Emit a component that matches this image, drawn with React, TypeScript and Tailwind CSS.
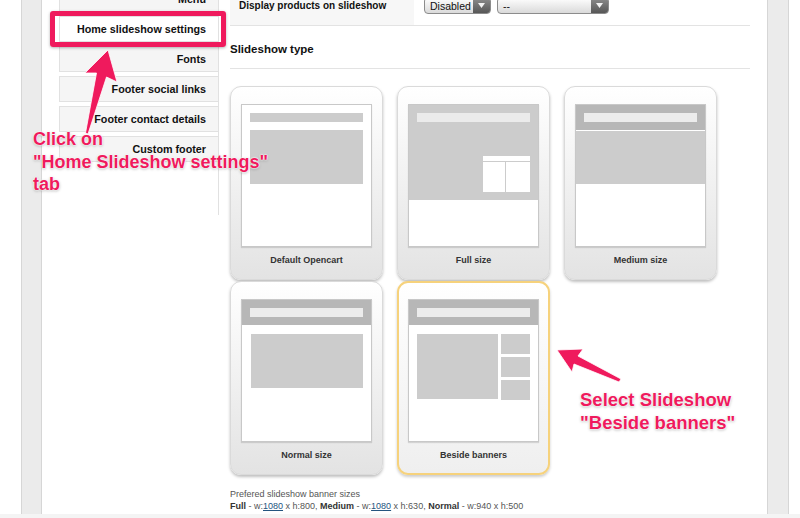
import React from 'react';

const PINK = 'text-[#ef1a5d]';

interface CardProps {
  label: string;
  selected?: boolean;
  children: React.ReactNode;
}

// one slideshow layout option
const LayoutCard: React.FC<CardProps> = ({ label, selected, children }) => (
  <div
    className={
      selected
        ? 'w-[153px] h-[194px] rounded-[11px] border-2 border-[#f6d27c] bg-linear-to-b from-white to-[#efefef] shadow-[0_2px_3px_rgba(0,0,0,0.2)] flex flex-col items-center pt-[16px]'
        : 'w-[153px] h-[194px] rounded-[11px] border border-[#dadada] bg-linear-to-b from-white to-[#e3e3e3] shadow-[0_2px_3px_rgba(0,0,0,0.25)] flex flex-col items-center pt-[17px]'
    }
  >
    <div className="w-[131px] h-[143px] bg-white border border-[#c8c8c8] shadow-[0_1px_1px_rgba(0,0,0,0.12)] overflow-hidden">
      {children}
    </div>
    <div className="mt-[8px] text-[9px] leading-[10px] font-bold text-[#333]">{label}</div>
  </div>
);

const Header = () => (
  <div className="h-[25px] bg-[#b7b7b7] px-[8px] pt-[8px]">
    <div className="h-[9px] bg-[#ececec]" />
  </div>
);

const Select: React.FC<{ text: string; width: string }> = ({ text, width }) => (
  <div
    className={`${width} h-[17px] rounded-[4px] border border-[#8c8c8c] bg-linear-to-b from-white to-[#dadada] flex items-center justify-between overflow-hidden`}
  >
    <span className="pl-[5px] text-[10.5px] leading-[12px] text-[#111]">{text}</span>
    <span className="w-[17px] h-full bg-linear-to-b from-[#8d8d8d] to-[#575757] flex items-center justify-center">
      <svg width="7" height="5" viewBox="0 0 7 5">
        <polygon points="0,0 7,0 3.5,5" fill="#f2f2f2" />
      </svg>
    </span>
  </div>
);

const tabs = ['Menu', 'Home slideshow settings', 'Fonts', 'Footer social links', 'Footer contact details', 'Custom footer'];

const Link: React.FC<{ children: React.ReactNode }> = ({ children }) => (
  <span className="text-[#24557f] underline">{children}</span>
);

export default function App() {
  return (
    <div className="w-[800px] h-[518px] relative overflow-hidden bg-white font-['Liberation_Sans',Arial,sans-serif]">
      <div className="flex h-[514px]">
        <div className="w-[21px]" />
        <div className="w-[21px] h-full bg-[#ebebeb] border-l border-r border-[#d6d6d6]" />

        {/* main content */}
        <div className="w-[725px] h-full flex overflow-hidden">
          {/* settings tabs */}
          <div className="w-[177px] h-[229px] -mt-[14px] pl-[17px] border-r border-[#e1e1e1] flex flex-col gap-[4px] shrink-0">
            {tabs.map((t) => (
              <div
                key={t}
                className={
                  t === 'Home slideshow settings'
                    ? 'h-[26px] flex items-center justify-end pr-[12px] border border-r-0 border-[#e1e1e1] bg-white text-[10.75px] font-bold text-[#111]'
                    : 'h-[26px] flex items-center justify-end pr-[12px] border border-r-0 border-[#e1e1e1] bg-[#f5f5f5] text-[10.75px] font-bold text-[#111]'
                }
              >
                {t}
              </div>
            ))}
          </div>

          <div className="ml-[11px] w-[520px] flex flex-col">
            {/* display products row */}
            <div className="h-[26px] flex border-b border-[#e3e3e3] shrink-0">
              <div className="w-[184px] h-full bg-[#f7f7f7] pl-[9px] text-[10px] leading-[12px] font-bold text-[#111]">
                Display products on slideshow
              </div>
              <div className="flex gap-[6px] ml-[10px] -mt-[3px]">
                <Select text="Disabled" width="w-[67px]" />
                <Select text="--" width="w-[112px]" />
              </div>
            </div>

            <div className="pt-[16px] pb-[12px] border-b border-[#e3e3e3]">
              <div className="text-[11.5px] leading-[14px] font-bold text-[#111]">Slideshow type</div>
            </div>

            {/* layout options */}
            <div className="mt-[17px] flex flex-wrap gap-x-[14px] gap-y-[1px]">
              <LayoutCard label="Default Opencart">
                <div className="px-[8px] pt-[8px]">
                  <div className="h-[9px] bg-[#cccccc]" />
                  <div className="mt-[8px] h-[54px] bg-[#cccccc]" />
                </div>
              </LayoutCard>

              <LayoutCard label="Full size">
                <div className="h-[95px] bg-[#cccccc] px-[8px] pt-[8px]">
                  <div className="h-[9px] bg-[#ebebeb]" />
                  <div className="mt-[34px] flex justify-end">
                    <div className="w-[47px] h-[36px] bg-white flex flex-col">
                      <div className="h-[6px] border-b border-[#cccccc]" />
                      <div className="flex-1 flex">
                        <div className="w-[23px] border-r border-[#cccccc]" />
                      </div>
                    </div>
                  </div>
                </div>
              </LayoutCard>

              <LayoutCard label="Medium size">
                <Header />
                <div className="mt-[1px] h-[53px] bg-[#cccccc]" />
              </LayoutCard>

              <LayoutCard label="Normal size">
                <Header />
                <div className="px-[8px] pt-[9px]">
                  <div className="ml-[1px] h-[54px] bg-[#cccccc]" />
                </div>
              </LayoutCard>

              <LayoutCard label="Beside banners" selected>
                <Header />
                <div className="px-[8px] pt-[9px] flex gap-[3px]">
                  <div className="w-[81px] h-[65px] bg-[#cccccc]" />
                  <div className="w-[29px] flex flex-col gap-[3px]">
                    <div className="h-[20px] bg-[#cccccc]" />
                    <div className="h-[20px] bg-[#cccccc]" />
                    <div className="h-[20px] bg-[#cccccc]" />
                  </div>
                </div>
              </LayoutCard>
            </div>

            <div className="mt-[13px] text-[9px] leading-[12px] text-[#555]">
              <div>Prefered slideshow banner sizes</div>
              <div>
                <b className="text-[#333]">Full</b> - w:<Link>1080</Link> x h:800, <b className="text-[#333]">Medium</b> - w:
                <Link>1080</Link> x h:630, <b className="text-[#333]">Normal</b> - w:940 x h:500
              </div>
            </div>
          </div>
        </div>

        <div className="w-[22px] h-full bg-[#ebebeb] border-l border-r border-[#d6d6d6]" />
        <div className="flex-1" />
      </div>
      <div className="h-[4px] bg-[#f4f4f4]" />

      {/* annotations */}
      <div className="absolute left-[50px] top-[11px] w-[176px] h-[36px] border-[5px] border-[#ef1a5d] rounded-[3px] shadow-[0_1px_3px_rgba(0,0,0,0.3)]" />
      <svg className="absolute left-0 top-0 pointer-events-none" width="800" height="518" viewBox="0 0 800 518">
        <g fill="#ef1a5d" stroke="#fff" strokeWidth="0.8" strokeLinejoin="round">
          <polygon points="108,50 117,82 106.5,77 88,134 85.5,133 96.5,73 85,73" />
          <polygon points="557,350 583,349 578,356 621,379 619,382 574,364 572,372" />
        </g>
      </svg>
      <div
        className={`absolute left-[33px] top-[128px] text-[18px] leading-[22.5px] font-bold ${PINK} [text-shadow:0_0_1px_#fff,0_0_2px_#fff,0_0_2px_#fff,0_1px_3px_rgba(0,0,0,0.35)]`}
      >
        <div>Click on</div>
        <div>"Home Slideshow settings"</div>
        <div>tab</div>
      </div>
      <div
        className={`absolute left-[580px] top-[388px] text-[18.5px] leading-[23px] font-bold ${PINK} [text-shadow:0_0_1px_#fff,0_0_2px_#fff,0_0_2px_#fff,0_1px_3px_rgba(0,0,0,0.35)]`}
      >
        <div>Select Slideshow</div>
        <div>"Beside banners"</div>
      </div>
    </div>
  );
}
